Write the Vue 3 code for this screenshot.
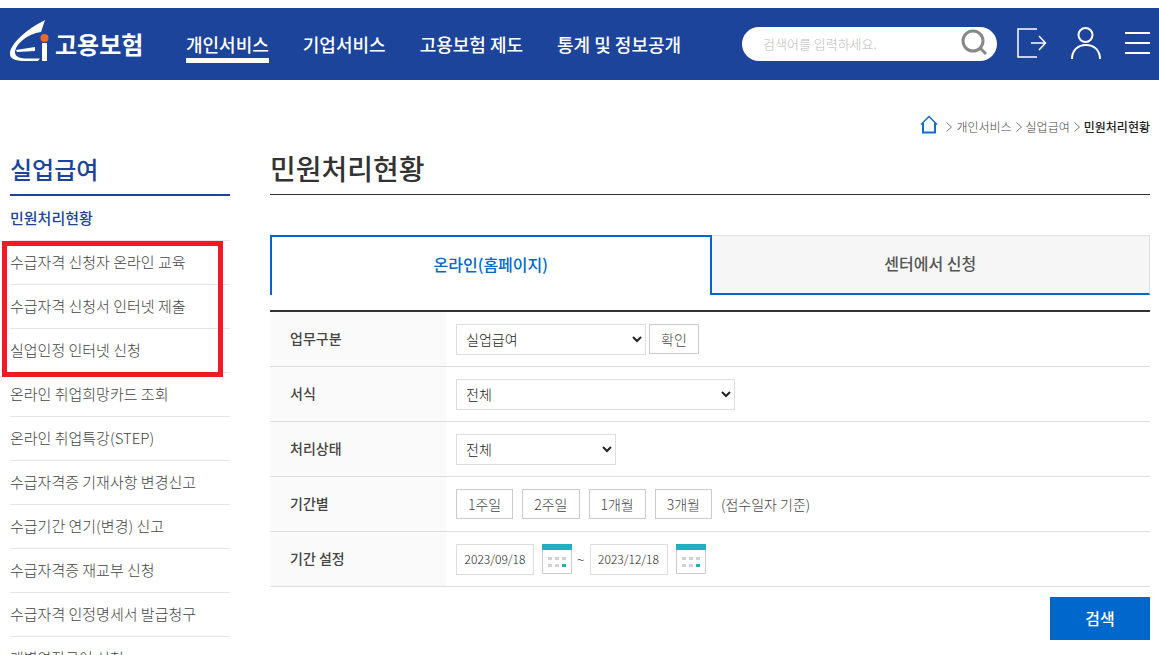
<script setup>
import { ref } from 'vue'

const navItems = ['개인서비스', '기업서비스', '고용보험 제도', '통계 및 정보공개']
const sideItems = [
  '민원처리현황',
  '수급자격 신청자 온라인 교육',
  '수급자격 신청서 인터넷 제출',
  '실업인정 인터넷 신청',
  '온라인 취업희망카드 조회',
  '온라인 취업특강(STEP)',
  '수급자격증 기재사항 변경신고',
  '수급기간 연기(변경) 신고',
  '수급자격증 재교부 신청',
  '수급자격 인정명세서 발급청구',
  '개별연장급여 신청',
]
const periods = ['1주일', '2주일', '1개월', '3개월']
const keyword = ref('')
const startDate = ref('2023/09/18')
const endDate = ref('2023/12/18')
</script>

<template>
  <div class="page">
    <header class="header">
      <a class="logo" href="#">
        <svg width="40" height="44" viewBox="0 0 40 44" aria-hidden="true">
          <path fill="#fff" d="M35 1 C21 8 3 21 0 33 C-1 40 5 42 16 42 H28 L30 39.500 H18 C10 39.500 5 38 5 33 C6 25 17 15 31 13 Z" />
          <path fill="#fff" d="M6 31 L25 28 V32 L7 33 Z" />
          <circle cx="34.500" cy="19" r="4" fill="#f26a2a" />
          <path fill="#fff" d="M32 24 H37 V42 H32 Z" />
        </svg>
        <span class="logo-text">고용보험</span>
      </a>
      <nav class="nav">
        <a v-for="(item, i) in navItems" :key="item" href="#" :class="{ active: i === 0 }">{{ item }}</a>
      </nav>
      <form class="search" @submit.prevent>
        <input v-model="keyword" type="text" placeholder="검색어를 입력하세요." aria-label="검색어" />
        <button type="submit" aria-label="검색">
          <svg width="28" height="28" viewBox="0 0 28 28" fill="none" stroke="#888" stroke-width="3">
            <circle cx="12" cy="12" r="10" />
            <path d="M18.500 18.500 L25 25" />
          </svg>
        </button>
      </form>
      <div class="tools">
        <button type="button" aria-label="로그아웃">
          <svg width="30" height="30" viewBox="0 0 30 30" fill="none" stroke="#fff" stroke-width="1.500">
            <path d="M20 1 H1 V29 H20" />
            <path d="M14 15 H28 M22 8 L28.500 15 L22 22" />
          </svg>
        </button>
        <button type="button" aria-label="내 정보">
          <svg width="30" height="32" viewBox="0 0 30 32" fill="none" stroke="#fff" stroke-width="2">
            <circle cx="14.500" cy="8" r="7" />
            <path d="M1 32 C1 23 7 18 15 18 S29 23 29 32" />
          </svg>
        </button>
        <button type="button" aria-label="전체 메뉴">
          <svg width="25" height="24" viewBox="0 0 25 24" fill="none" stroke="#fff" stroke-width="2">
            <path d="M0 2 H25 M0 12 H25 M0 22 H25" />
          </svg>
        </button>
      </div>
    </header>

    <div class="body">
      <aside class="side">
        <h2>실업급여</h2>
        <ul>
          <li v-for="(item, i) in sideItems" :key="item">
            <a href="#" :class="{ current: i === 0 }">{{ item }}</a>
          </li>
        </ul>
        <div class="marker"></div>
      </aside>

      <main class="main">
        <nav class="crumbs" aria-label="현재 위치">
          <a class="home" href="#" aria-label="홈">
            <svg width="18" height="19" viewBox="0 0 18 19" fill="none" stroke="#0f6ecb" stroke-width="2">
              <path d="M1 9.500 L9 1.500 L17 9.500" stroke-width="1.500" />
              <path d="M3 8 V17.500 H15 V8" />
            </svg>
          </a>
          <svg width="6" height="10" viewBox="0 0 6 10" fill="none" stroke="#777"><path d="M.5 .5 L5.500 5 L.5 9.500" /></svg>
          <a href="#">개인서비스</a>
          <svg width="6" height="10" viewBox="0 0 6 10" fill="none" stroke="#777"><path d="M.5 .5 L5.500 5 L.5 9.500" /></svg>
          <a href="#">실업급여</a>
          <svg width="6" height="10" viewBox="0 0 6 10" fill="none" stroke="#777"><path d="M.5 .5 L5.500 5 L.5 9.500" /></svg>
          <strong>민원처리현황</strong>
        </nav>
        <h1>민원처리현황</h1>

        <div class="tabs" role="tablist">
          <button type="button" role="tab" aria-selected="true" class="on">온라인(홈페이지)</button>
          <button type="button" role="tab" aria-selected="false">센터에서 신청</button>
        </div>

        <table class="form">
          <tbody>
            <tr>
              <th scope="row"><label for="work">업무구분</label></th>
              <td>
                <div class="line tight">
                  <select id="work" class="w-work"><option>실업급여</option></select>
                  <button type="button" class="small">확인</button>
                </div>
              </td>
            </tr>
            <tr>
              <th scope="row"><label for="doc">서식</label></th>
              <td><div class="line"><select id="doc" class="w-doc"><option>전체</option></select></div></td>
            </tr>
            <tr>
              <th scope="row"><label for="state">처리상태</label></th>
              <td><div class="line"><select id="state" class="w-state"><option>전체</option></select></div></td>
            </tr>
            <tr>
              <th scope="row">기간별</th>
              <td>
                <div class="line">
                  <button v-for="p in periods" :key="p" type="button" class="small">{{ p }}</button>
                  <span>(접수일자 기준)</span>
                </div>
              </td>
            </tr>
            <tr>
              <th scope="row"><label for="from">기간 설정</label></th>
              <td>
                <div class="line dates">
                  <input id="from" v-model="startDate" type="text" />
                  <button type="button" aria-label="시작일 선택">
                    <svg width="30" height="30" viewBox="0 0 30 30">
                      <path d="M.5 1 V29.500 H29.500 V1" fill="#fff" stroke="#ccc" />
                      <path d="M0 0 H30 V6 H0 Z" fill="#25adc0" />
                      <path d="M6 13h4v3h-4z M13 13h4v3h-4z M20 13h4v3h-4z M6 20h4v3h-4z M13 20h4v3h-4z" fill="#d2d2d2" />
                      <path d="M20 20h4v3h-4z" fill="#25adc0" />
                    </svg>
                  </button>
                  <span class="tilde">~</span>
                  <input v-model="endDate" type="text" aria-label="종료일" />
                  <button type="button" aria-label="종료일 선택">
                    <svg width="30" height="30" viewBox="0 0 30 30">
                      <path d="M.5 1 V29.500 H29.500 V1" fill="#fff" stroke="#ccc" />
                      <path d="M0 0 H30 V6 H0 Z" fill="#25adc0" />
                      <path d="M6 13h4v3h-4z M13 13h4v3h-4z M20 13h4v3h-4z M6 20h4v3h-4z M13 20h4v3h-4z" fill="#d2d2d2" />
                      <path d="M20 20h4v3h-4z" fill="#25adc0" />
                    </svg>
                  </button>
                </div>
              </td>
            </tr>
          </tbody>
        </table>
        <div class="actions"><button type="button">검색</button></div>
      </main>
    </div>
  </div>
</template>

<style>
body {
  background: #fff;
}
</style>

<style scoped>
.page {
  box-sizing: border-box;
  height: 100vh;
  overflow: hidden;
  padding-top: 8px;
  color: #444;
  font-family: "Noto Sans CJK KR", sans-serif;
  font-size: 14px;
  font-weight: 300;
}
.page * {
  box-sizing: border-box;
}
a {
  color: inherit;
  text-decoration: none;
}
button,
input,
select {
  margin: 0;
  font: inherit;
  color: inherit;
}
button {
  padding: 0;
  border: 0;
  background: none;
  cursor: pointer;
}
svg {
  display: block;
}
h1,
h2,
ul {
  margin: 0;
  padding: 0;
  list-style: none;
}

.header {
  display: flex;
  align-items: center;
  height: 72px;
  padding: 0 9px 0 10px;
  background: #1c449b;
  color: #fff;
}
.logo {
  display: flex;
  align-items: center;
  gap: 5px;
  width: 176px;
  padding-bottom: 6px;
}
.logo-text {
  padding-top: 6px;
  font-size: 24px;
  font-weight: 700;
  line-height: 32px;
}
.nav {
  display: flex;
  gap: 34px;
  font-size: 18px;
  font-weight: 500;
  line-height: 28px;
}
.nav a {
  margin-top: 5px;
  border-bottom: 5px solid transparent;
  white-space: nowrap;
}
.nav .active {
  border-bottom-color: #fff;
}
.search {
  display: flex;
  align-items: center;
  width: 255px;
  height: 34px;
  margin-left: auto;
  padding: 0 8px 2px 21px;
  border-radius: 17px;
  background: #fff;
}
.search input {
  flex: 1;
  min-width: 0;
  padding: 0;
  border: 0;
  outline: 0;
  background: none;
  color: #333;
  font-size: 13px;
}
.search input::placeholder {
  color: #bbb;
}
.tools {
  display: flex;
  align-items: center;
  gap: 24px;
  margin-left: 20px;
  padding-bottom: 2px;
}

.body {
  display: flex;
  gap: 40px;
  padding: 0 9px 0 10px;
}
.side {
  position: relative;
  flex: 0 0 220px;
  padding-top: 70px;
}
.side h2 {
  height: 46px;
  border-bottom: 2px solid #1c449b;
  color: #1c449b;
  font-size: 24px;
  font-weight: 500;
  line-height: 38px;
}
.side ul {
  padding-top: 1px;
}
.side li {
  padding-bottom: 2px;
  border-bottom: 1px solid #e5e5ea;
  font-size: 15px;
  line-height: 41px;
}
.side a {
  display: block;
}
.side .current {
  color: #1c449b;
  font-weight: 500;
}
.marker {
  position: absolute;
  top: 161px;
  left: -8px;
  width: 221px;
  height: 136px;
  border: 5px solid #ed1c24;
  pointer-events: none;
}

.main {
  flex: 1;
  min-width: 0;
}
.crumbs {
  display: flex;
  align-items: center;
  justify-content: flex-end;
  gap: 4px;
  padding-top: 35px;
  font-size: 12px;
  line-height: 22px;
}
.crumbs .home {
  margin-right: 4px;
  padding-bottom: 4px;
}
.crumbs strong {
  color: #222;
  font-weight: 500;
}
h1 {
  height: 57px;
  padding-top: 10px;
  border-bottom: 1px solid #333;
  color: #333;
  font-size: 28px;
  font-weight: 500;
  line-height: 40px;
}
.tabs {
  display: flex;
  height: 60px;
  margin: 40px 0 15px;
}
.tabs button {
  flex: 1;
  padding-bottom: 4px;
  border: 1px solid #e0e0e0;
  border-bottom: 2px solid #0068cc;
  border-left: 0;
  background: #f6f6f6;
  color: #555;
  font-size: 16px;
  font-weight: 500;
}
.tabs .on {
  border: 2px solid #0068cc;
  border-bottom: 0;
  background: #fff;
  color: #0068cc;
}

.form {
  width: 100%;
  border-top: 2px solid #333;
  border-spacing: 0;
}
.form th,
.form td {
  height: 55px;
  padding: 0 10px;
  border-bottom: 1px solid #ddd;
  text-align: left;
}
.form th {
  width: 176px;
  padding: 0 0 2px 20px;
  background: #fafafa;
  color: #444;
  font-weight: 500;
}
.line {
  display: flex;
  align-items: center;
  gap: 9px;
}
.line.tight {
  gap: 3px;
}
select {
  height: 31px;
  padding: 0 0 0 5px;
  border: 1px solid #ddd;
  border-radius: 0;
  background: #fff;
  color: #222;
}
.w-work {
  width: 190px;
}
.w-doc {
  width: 279px;
}
.w-state {
  width: 160px;
}
.small {
  height: 30px;
  padding: 0 11px;
  border: 1px solid #ccc;
  background: #fff;
}
.line.dates {
  gap: 8px;
}
.dates input {
  width: 78px;
  height: 31px;
  padding: 0 0 2px;
  border: 1px solid #ddd;
  color: #222;
  font-size: 12px;
  text-align: center;
}
.tilde {
  margin: 0 -3px;
}
.actions {
  display: flex;
  justify-content: flex-end;
  padding-top: 10px;
}
.actions button {
  width: 100px;
  height: 43px;
  padding-bottom: 2px;
  background: #0068cc;
  color: #fff;
  font-size: 16px;
  font-weight: 500;
}
</style>
